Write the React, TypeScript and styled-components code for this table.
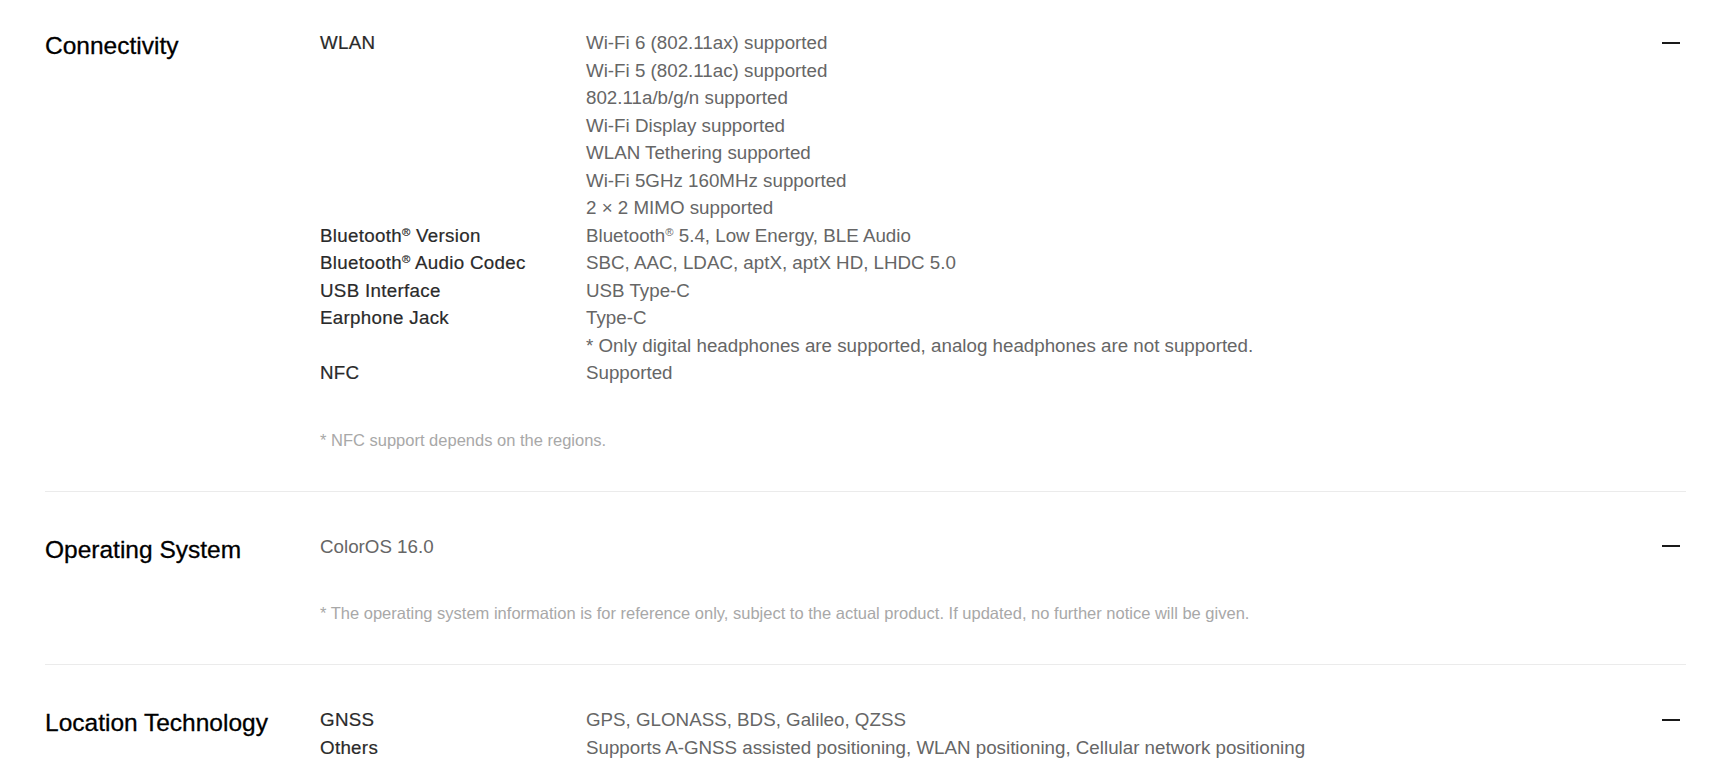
import React from "react";
import styled, { createGlobalStyle } from "styled-components";

const GlobalStyle = createGlobalStyle`
  html, body {
    margin: 0;
    padding: 0;
    background: #ffffff;
    overflow: hidden;
  }
  body {
    font-family: "Liberation Sans", Arial, Helvetica, sans-serif;
    -webkit-font-smoothing: antialiased;
  }
`;

const Page = styled.main`
  padding: 0 24px 0 45px;
`;

const Section = styled.section<{ $first?: boolean }>`
  display: grid;
  grid-template-columns: 275px 1fr 30px;
  align-items: start;
  padding: ${(p) => (p.$first ? "29px" : "41px")} 0 39px;
  border-bottom: 1px solid #ebebeb;
`;

const Title = styled.h2`
  margin: 0;
  font-size: 24.5px;
  line-height: 34px;
  font-weight: 400;
  color: #000000;
  -webkit-text-stroke: 0.3px #000000;
`;

const Content = styled.div`
  display: flex;
  flex-direction: column;
`;

const SpecGrid = styled.dl`
  margin: 0;
  display: grid;
  grid-template-columns: 266px 1fr;
  font-size: 18.75px;
  line-height: 27.5px;
`;

const Label = styled.dt`
  margin: 0;
  color: #2a2a2a;
  letter-spacing: 0.3px;
  -webkit-text-stroke: 0.2px #2a2a2a;
  white-space: nowrap;
`;

const Values = styled.dd`
  margin: 0;
  display: flex;
  flex-direction: column;
  color: #666666;
`;

const Line = styled.span`
  display: block;
  white-space: nowrap;
`;

const PlainText = styled.p`
  margin: 0;
  font-size: 18.75px;
  line-height: 27.5px;
  color: #666666;
`;

const Note = styled.p`
  margin: 41px 0 0;
  font-size: 16.5px;
  line-height: 24px;
  color: #a8a8a8;
`;

const Toggle = styled.button`
  height: 27.5px;
  width: 30px;
  padding: 0;
  border: 0;
  background: transparent;
  display: flex;
  align-items: center;
  justify-content: center;
  cursor: pointer;
`;

const Minus = styled.span`
  display: block;
  width: 18px;
  height: 2px;
  background: #1a1a1a;
`;

const Reg = styled.span`
  font-size: 0.6em;
  vertical-align: 0.55em;
  line-height: 0;
`;

function withReg(text: string): React.ReactNode {
  const parts = text.split("®");
  return parts.map((p, i) => (
    <React.Fragment key={i}>
      {p}
      {i < parts.length - 1 && <Reg>®</Reg>}
    </React.Fragment>
  ));
}

type Row = { label: string; values: string[] };
type SectionData = {
  title: string;
  rows?: Row[];
  plain?: string;
  note?: string;
};

const sections: SectionData[] = [
  {
    title: "Connectivity",
    rows: [
      {
        label: "WLAN",
        values: [
          "Wi-Fi 6 (802.11ax) supported",
          "Wi-Fi 5 (802.11ac) supported",
          "802.11a/b/g/n supported",
          "Wi-Fi Display supported",
          "WLAN Tethering supported",
          "Wi-Fi 5GHz 160MHz supported",
          "2 × 2 MIMO supported",
        ],
      },
      {
        label: "Bluetooth® Version",
        values: ["Bluetooth® 5.4, Low Energy, BLE Audio"],
      },
      {
        label: "Bluetooth® Audio Codec",
        values: ["SBC, AAC, LDAC, aptX, aptX HD, LHDC 5.0"],
      },
      { label: "USB Interface", values: ["USB Type-C"] },
      {
        label: "Earphone Jack",
        values: [
          "Type-C",
          "* Only digital headphones are supported, analog headphones are not supported.",
        ],
      },
      { label: "NFC", values: ["Supported"] },
    ],
    note: "* NFC support depends on the regions.",
  },
  {
    title: "Operating System",
    plain: "ColorOS 16.0",
    note:
      "* The operating system information is for reference only, subject to the actual product. If updated, no further notice will be given.",
  },
  {
    title: "Location Technology",
    rows: [
      { label: "GNSS", values: ["GPS, GLONASS, BDS, Galileo, QZSS"] },
      {
        label: "Others",
        values: [
          "Supports A-GNSS assisted positioning, WLAN positioning, Cellular network positioning",
        ],
      },
    ],
  },
];

export default function App() {
  return (
    <>
      <GlobalStyle />
      <Page>
        {sections.map((s, idx) => (
          <Section key={s.title} $first={idx === 0}>
            <Title>{s.title}</Title>
            <Content>
              {s.rows && (
                <SpecGrid>
                  {s.rows.map((r) => (
                    <React.Fragment key={r.label}>
                      <Label>{withReg(r.label)}</Label>
                      <Values>
                        {r.values.map((v) => (
                          <Line key={v}>{withReg(v)}</Line>
                        ))}
                      </Values>
                    </React.Fragment>
                  ))}
                </SpecGrid>
              )}
              {s.plain && <PlainText>{s.plain}</PlainText>}
              {s.note && <Note>{s.note}</Note>}
            </Content>
            <Toggle aria-label="Collapse">
              <Minus />
            </Toggle>
          </Section>
        ))}
      </Page>
    </>
  );
}
